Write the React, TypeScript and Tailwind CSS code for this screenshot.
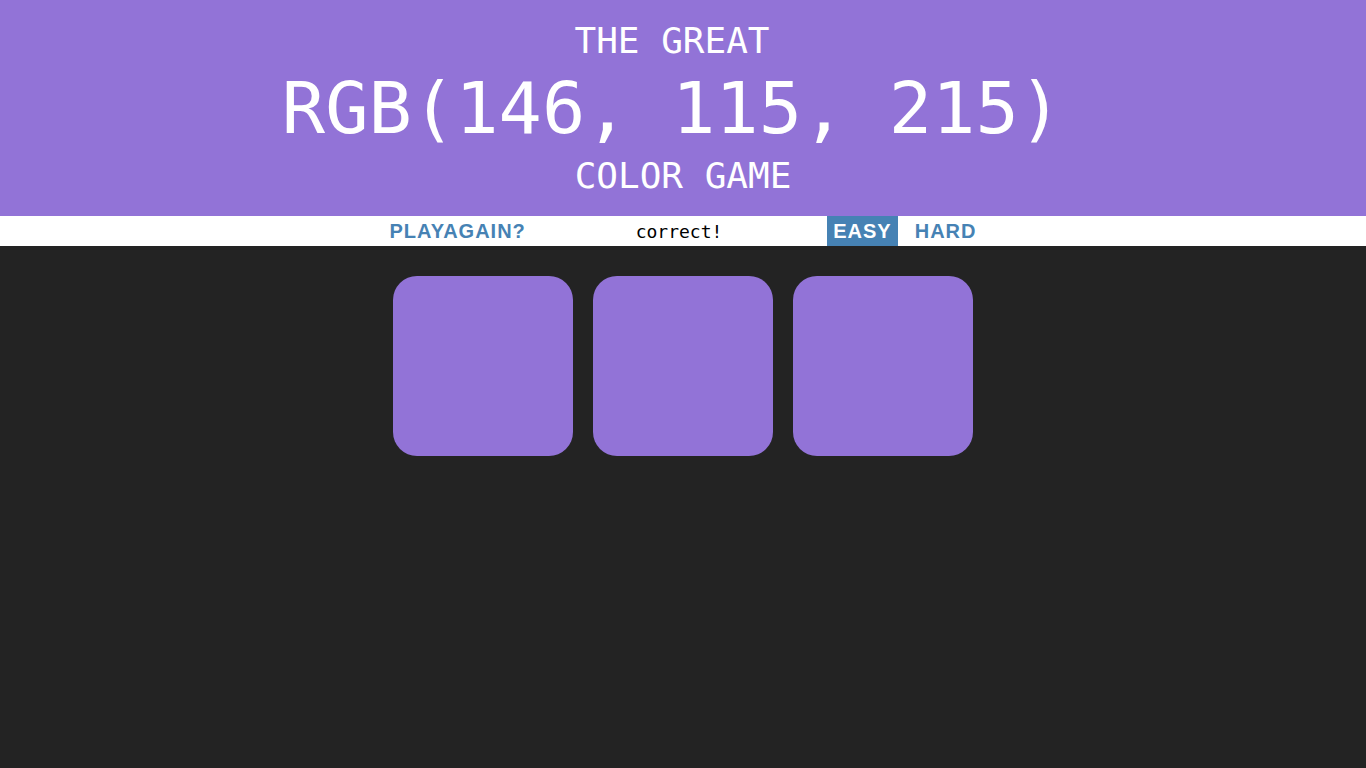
const squares = ["#9273d7", "#9273d7", "#9273d7"];

const App = () => {
  return (
    <main className="min-h-screen bg-[#232323]">
      <h1 className="bg-[#9273d7] text-white text-center font-['DejaVu_Sans_Mono',monospace] font-normal uppercase pt-[18px] pb-[18px]">
        <span className="block text-[36px] leading-[45px] pr-[22px]">The Great</span>
        <span className="block text-[72px] leading-[90px] pr-[22px]">RGB(146, 115, 215)</span>
        <span className="block text-[36px] leading-[45px]">Color Game</span>
      </h1>
      <section className="bg-white h-[30px]">
        <div className="w-[599px] h-full mx-auto flex items-stretch">
          <button className="px-[6px] h-full uppercase font-bold text-[20px] tracking-[1px] text-[#4682b4] font-['Liberation_Sans',Arial,sans-serif]">
            PlayAgain?
          </button>
          <span className="flex-1 flex items-center justify-center pr-[1px] text-[18px] text-black font-['DejaVu_Sans_Mono',monospace]">
            correct!
          </span>
          <button className="px-[6px] h-full uppercase font-bold text-[20px] tracking-[1px] text-white bg-[#4682b4] font-['Liberation_Sans',Arial,sans-serif]">
            Easy
          </button>
          <button className="ml-[11px] px-[6px] h-full uppercase font-bold text-[20px] tracking-[1px] text-[#4682b4] font-['Liberation_Sans',Arial,sans-serif]">
            Hard
          </button>
        </div>
      </section>
      <section className="w-[600px] mx-auto mt-[20px] flex flex-wrap">
        {squares.map((c, i) => (
          <div
            key={i}
            className="w-[180px] h-[180px] m-[10px] rounded-[24px]"
            style={{ backgroundColor: c }}
          />
        ))}
      </section>
    </main>
  );
};

export default App;
